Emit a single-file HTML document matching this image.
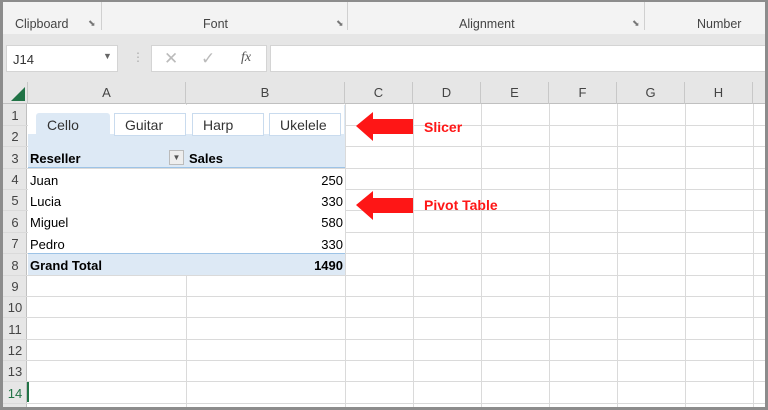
<!DOCTYPE html>
<html><head><style>
*{margin:0;padding:0;box-sizing:border-box}
body{width:768px;height:410px;overflow:hidden;background:#fff;font-family:"Liberation Sans",sans-serif;position:relative}
.a{position:absolute}
.vl{position:absolute;width:1px;background:#dadada}
.hl{position:absolute;height:1px;background:#dadada}
.rn{position:absolute;left:3px;width:24px;text-align:center;font-size:13px;color:#444}
.ch{position:absolute;top:82px;height:22px;line-height:22px;text-align:center;font-size:13px;color:#444;border-right:1px solid #c8c8c8}
.t{position:absolute;font-size:13px;color:#000}
.r{position:absolute;font-size:13px;color:#000;right:425px;text-align:right}
.sl{position:absolute;top:113px;height:23px;border:1px solid #c9dbee;background:#fff;font-size:14px;color:#333;line-height:22px;padding-left:10px}
</style></head><body>
<div class="a" style="left:0;top:0;width:768px;height:410px;border:3px solid #8c8c8c;border-top-width:2px;z-index:10;pointer-events:none"></div>
<div class="a" style="left:0;top:0;width:768px;height:34px;background:#f3f3f3"></div>
<div class="a" style="left:101px;top:2px;width:1px;height:28px;background:#d0d0d0"></div>
<div class="a" style="left:347px;top:2px;width:1px;height:28px;background:#d0d0d0"></div>
<div class="a" style="left:644px;top:2px;width:1px;height:28px;background:#d0d0d0"></div>
<div class="t" style="left:15px;top:17px;font-size:12.5px;color:#444">Clipboard</div>
<div class="t" style="left:203px;top:17px;font-size:12.5px;color:#444">Font</div>
<div class="t" style="left:459px;top:17px;font-size:12.5px;color:#444">Alignment</div>
<div class="t" style="left:697px;top:17px;font-size:12.5px;color:#444">Number</div>
<div class="t" style="left:88px;top:18px;font-size:9px;color:#777">⬊</div>
<div class="t" style="left:336px;top:18px;font-size:9px;color:#777">⬊</div>
<div class="t" style="left:632px;top:18px;font-size:9px;color:#777">⬊</div>
<div class="a" style="left:0;top:34px;width:768px;height:70px;background:#e6e6e6"></div>
<div class="a" style="left:6px;top:45px;width:112px;height:27px;background:#fff;border:1px solid #d4d4d4"></div>
<div class="t" style="left:13px;top:52px;font-size:13px;color:#333">J14</div>
<div class="t" style="left:103px;top:51px;font-size:9px;color:#666">▼</div>
<div class="t" style="left:132px;top:50px;font-size:12px;color:#aaa">⋮</div>
<div class="a" style="left:151px;top:45px;width:116px;height:27px;background:#fff;border:1px solid #d4d4d4"></div>
<div class="t" style="left:164px;top:49px;font-size:17px;color:#bbb">✕</div>
<div class="t" style="left:201px;top:49px;font-size:17px;color:#bbb">✓</div>
<div class="t" style="left:241px;top:50px;font-size:14px;color:#555;font-style:italic;font-family:'Liberation Serif',serif">fx</div>
<div class="a" style="left:270px;top:45px;width:498px;height:27px;background:#fff;border:1px solid #d4d4d4"></div>
<div class="a" style="left:0;top:82px;width:768px;height:22px;background:#e6e6e6;border-bottom:1px solid #c0c0c0"></div>
<svg class="a" style="left:10px;top:86px" width="16" height="16"><polygon points="15,1 15,15 1,15" fill="#217346"/></svg>
<div class="ch" style="left:27px;width:159px;border-left:1px solid #c8c8c8">A</div>
<div class="ch" style="left:186px;width:159px">B</div>
<div class="ch" style="left:345px;width:68px">C</div>
<div class="ch" style="left:413px;width:68px">D</div>
<div class="ch" style="left:481px;width:68px">E</div>
<div class="ch" style="left:549px;width:68px">F</div>
<div class="ch" style="left:617px;width:68px">G</div>
<div class="ch" style="left:685px;width:68px">H</div>
<div class="a" style="left:0;top:104px;width:27px;height:306px;background:#e6e6e6;border-right:1px solid #c0c0c0"></div>
<div class="vl" style="left:186px;top:104px;height:306px"></div>
<div class="vl" style="left:345px;top:104px;height:306px"></div>
<div class="vl" style="left:413px;top:104px;height:306px"></div>
<div class="vl" style="left:481px;top:104px;height:306px"></div>
<div class="vl" style="left:549px;top:104px;height:306px"></div>
<div class="vl" style="left:617px;top:104px;height:306px"></div>
<div class="vl" style="left:685px;top:104px;height:306px"></div>
<div class="vl" style="left:753px;top:104px;height:306px"></div>
<div class="hl" style="left:0;top:125px;width:768px"></div>
<div class="hl" style="left:0;top:146px;width:768px"></div>
<div class="hl" style="left:0;top:168px;width:768px"></div>
<div class="hl" style="left:0;top:189px;width:768px"></div>
<div class="hl" style="left:0;top:210px;width:768px"></div>
<div class="hl" style="left:0;top:232px;width:768px"></div>
<div class="hl" style="left:0;top:253px;width:768px"></div>
<div class="hl" style="left:0;top:275px;width:768px"></div>
<div class="hl" style="left:0;top:296px;width:768px"></div>
<div class="hl" style="left:0;top:317px;width:768px"></div>
<div class="hl" style="left:0;top:339px;width:768px"></div>
<div class="hl" style="left:0;top:360px;width:768px"></div>
<div class="hl" style="left:0;top:381px;width:768px"></div>
<div class="hl" style="left:0;top:403px;width:768px"></div>
<div class="rn" style="top:108px">1</div><div class="rn" style="top:129px">2</div>
<div class="rn" style="top:151px">3</div><div class="rn" style="top:172px">4</div>
<div class="rn" style="top:193px">5</div><div class="rn" style="top:215px">6</div>
<div class="rn" style="top:236px">7</div><div class="rn" style="top:258px">8</div>
<div class="rn" style="top:279px">9</div><div class="rn" style="top:300px">10</div>
<div class="rn" style="top:322px">11</div><div class="rn" style="top:343px">12</div>
<div class="rn" style="top:364px">13</div><div class="rn" style="top:386px;color:#217346">14</div>
<div class="a" style="left:27px;top:382px;width:2px;height:20px;background:#217346"></div>
<div class="a" style="left:28px;top:105px;width:317px;height:30px;background:#fff;border-right:1px solid #dde9f5"></div>
<div class="a" style="left:28px;top:134px;width:317px;height:34px;background:#dde9f5;border-bottom:1px solid #9dc3e6"></div>
<div class="sl" style="left:36px;width:74px;height:24px;background:#dde9f5;border-color:#dde9f5;border-radius:3px 3px 0 0">Cello</div>
<div class="sl" style="left:114px;width:72px">Guitar</div>
<div class="sl" style="left:192px;width:72px">Harp</div>
<div class="sl" style="left:269px;width:72px">Ukelele</div>
<div class="a" style="left:28px;top:169px;width:317px;height:85px;background:#fff"></div>
<div class="t" style="left:30px;top:151px;font-weight:bold">Reseller</div>
<div class="a" style="left:169px;top:150px;width:15px;height:15px;border:1px solid #bbb;background:#eee;font-size:8px;color:#555;text-align:center;line-height:14px">▼</div>
<div class="t" style="left:189px;top:151px;font-weight:bold">Sales</div>
<div class="t" style="left:30px;top:173px">Juan</div><div class="r" style="top:173px">250</div>
<div class="t" style="left:30px;top:194px">Lucia</div><div class="r" style="top:194px">330</div>
<div class="t" style="left:30px;top:215px">Miguel</div><div class="r" style="top:215px">580</div>
<div class="t" style="left:30px;top:237px">Pedro</div><div class="r" style="top:237px">330</div>
<div class="a" style="left:28px;top:253px;width:317px;height:22px;background:#dde9f5;border-top:1px solid #9dc3e6"></div>
<div class="t" style="left:30px;top:258px;font-weight:bold">Grand Total</div>
<div class="r" style="top:258px;font-weight:bold">1490</div>
<svg class="a" style="left:355px;top:111px" width="60" height="31"><polygon points="1,15 18,1 18,8 58,8 58,23 18,23 18,30" fill="#fe1616"/></svg>
<svg class="a" style="left:355px;top:190px" width="60" height="31"><polygon points="1,15 18,1 18,8 58,8 58,23 18,23 18,30" fill="#fe1616"/></svg>
<div class="t" style="left:424px;top:119px;color:#fe1616;font-weight:bold;font-size:14px">Slicer</div>
<div class="t" style="left:424px;top:197px;color:#fe1616;font-weight:bold;font-size:14px">Pivot Table</div>
</body></html>
